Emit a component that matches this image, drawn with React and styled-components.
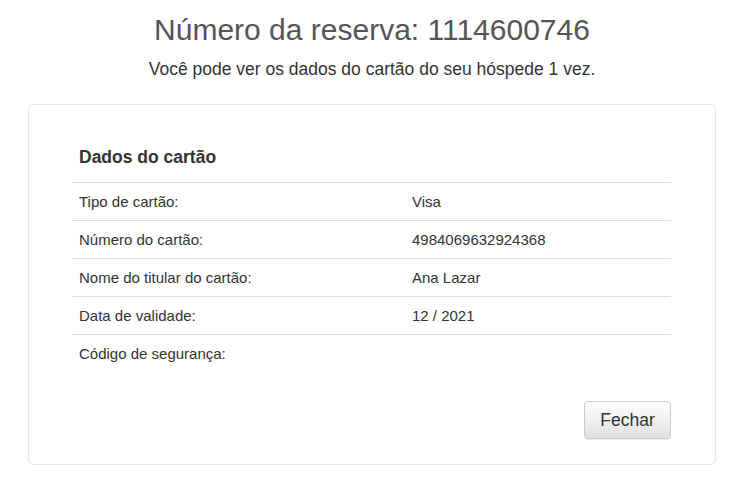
import React from "react";
import styled, { createGlobalStyle } from "styled-components";

const GlobalStyle = createGlobalStyle`
  body {
    margin: 0;
    background: #fff;
    font-family: "Liberation Sans", Arial, sans-serif;
    color: #333;
  }
`;

const Page = styled.div`
  width: 742px;
  padding: 12px 26px 0 28px;
  box-sizing: border-box;
`;

const Title = styled.h1`
  margin: 0;
  text-align: center;
  font-size: 30px;
  font-weight: normal;
  line-height: 36px;
  color: #555;
`;

const Subtitle = styled.p`
  margin: 11px 0 0;
  text-align: center;
  font-size: 17.5px;
  line-height: 20px;
  color: #333;
`;

const Card = styled.div`
  margin-top: 25px;
  border: 1px solid #dde7ee;
  border-radius: 6px;
  padding: 27px 44px 25px 43px;
`;

const CardHeading = styled.h2`
  margin: 0 0 0 7px;
  font-size: 17.5px;
  font-weight: bold;
  line-height: 50px;
  color: #333;
`;

const Table = styled.div`
  border-top: 1px solid #ddd;
`;

const Row = styled.div`
  display: grid;
  grid-template-columns: 333px 1fr;
  height: 37px;
  align-items: center;
  border-bottom: ${(p) => (p.$last ? "none" : "1px solid #ddd")};
  font-size: 15px;
`;

const Cell = styled.div`
  padding: 0 7px;
`;

const Footer = styled.div`
  display: flex;
  justify-content: flex-end;
  margin-top: 29px;
`;

const Button = styled.button`
  width: 87px;
  height: 38px;
  font-family: "Liberation Sans", Arial, sans-serif;
  font-size: 17.5px;
  color: #333;
  border: 1px solid #ccc;
  border-radius: 4px;
  background: linear-gradient(to bottom, #fff 0%, #e0e0e0 100%);
  box-shadow: inset 0 1px 0 rgba(255, 255, 255, 0.15), 0 1px 1px rgba(0, 0, 0, 0.075);
  cursor: pointer;
`;

const rows = [
  ["Tipo de cartão:", "Visa"],
  ["Número do cartão:", "4984069632924368"],
  ["Nome do titular do cartão:", "Ana Lazar"],
  ["Data de validade:", "12 / 2021"],
  ["Código de segurança:", ""],
];

export default function App() {
  return (
    <Page>
      <GlobalStyle />
      <Title>Número da reserva: 1114600746</Title>
      <Subtitle>Você pode ver os dados do cartão do seu hóspede 1 vez.</Subtitle>
      <Card>
        <CardHeading>Dados do cartão</CardHeading>
        <Table>
          {rows.map(([label, value], i) => (
            <Row key={label} $last={i === rows.length - 1}>
              <Cell>{label}</Cell>
              <Cell>{value}</Cell>
            </Row>
          ))}
        </Table>
        <Footer>
          <Button>Fechar</Button>
        </Footer>
      </Card>
    </Page>
  );
}
